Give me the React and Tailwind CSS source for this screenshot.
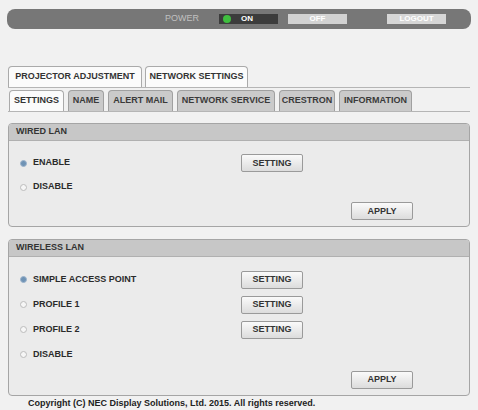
import React from 'react';

const font = { fontFamily: '"Liberation Sans", Arial, sans-serif' };

const Btn = ({ label }) => (
  <button className="w-[62px] h-[18px] rounded-[2px] border border-[#9a9a9a] bg-gradient-to-b from-[#fafafa] to-[#dcdcdc] text-[9px] font-bold text-[#333] leading-none">
    {label}
  </button>
);

const Radio = ({ checked, label }) => (
  <div className="flex items-center gap-[6px]">
    <span
      className={`w-[7px] h-[7px] rounded-full border ${
        checked ? 'bg-[#6f93b5] border-[#9db4cc]' : 'bg-[#f6f6f6] border-[#bcbcbc]'
      }`}
    />
    <span className="text-[9px] font-bold text-[#2a2a2a]">{label}</span>
  </div>
);

const Row = ({ checked, label, setting, h = 'h-[24px]' }) => (
  <div className={`flex items-center ${h}`}>
    <div className="w-[232px] pl-[11px]">
      <Radio checked={checked} label={label} />
    </div>
    {setting && <Btn label="SETTING" />}
  </div>
);

const Panel = ({ title, children }) => (
  <div className="mx-[8px] rounded-[4px] border border-[#a5a5a5] bg-[#ebebeb] overflow-hidden">
    <div className="h-[17px] bg-[#c7c7c7] border-b border-[#b0b0b0] flex items-center pl-[7px] text-[9px] font-bold text-[#333]">
      {title}
    </div>
    {children}
  </div>
);

const tabs2 = [
  { label: 'SETTINGS', w: 'w-[55px]', active: true },
  { label: 'NAME', w: 'w-[36px]' },
  { label: 'ALERT MAIL', w: 'w-[65px]' },
  { label: 'NETWORK SERVICE', w: 'w-[98px]' },
  { label: 'CRESTRON', w: 'w-[56px]' },
  { label: 'INFORMATION', w: 'w-[73px]' },
];

export default function App() {
  return (
    <div className="w-[478px] h-[410px] bg-[#f1f1f1] overflow-hidden" style={font}>
      <div className="pt-[9px] px-[7px]">
        <div className="h-[20px] rounded-[8px] bg-[#777777] flex items-center pl-[158px]">
          <span className="text-[9px] text-[#c0c0c0] w-[54px]">POWER</span>
          <div className="w-[59px] h-[10px] bg-[#3c3c3c] flex items-center pl-[4px] gap-[10px]">
            <span className="w-[8px] h-[8px] rounded-full bg-[#3fbf3f]" />
            <span className="text-[8px] font-bold text-white">ON</span>
          </div>
          <div className="ml-[10px] w-[59px] h-[10px] bg-[#d2d2d2] flex items-center justify-center text-[8px] font-bold text-white">
            OFF
          </div>
          <div className="ml-[40px] w-[59px] h-[10px] bg-[#d6d6d6] flex items-center justify-center text-[8px] font-bold text-white">
            LOGOUT
          </div>
        </div>
      </div>

      <div className="mt-[37px] pl-[8px] pr-[8px]">
        <div className="flex gap-[3px] border-b border-[#b5b5b5]">
          <div className="w-[134px] h-[21px] rounded-t-[4px] border border-b-0 border-[#aaaaaa] bg-[#fbfbfb] flex items-center justify-center text-[9px] font-bold text-[#333]">
            PROJECTOR ADJUSTMENT
          </div>
          <div className="w-[103px] h-[21px] rounded-t-[4px] border border-b-0 border-[#aaaaaa] bg-[#fbfbfb] flex items-center justify-center text-[9px] font-bold text-[#333]">
            NETWORK SETTINGS
          </div>
        </div>
        <div className="flex gap-[4px] pt-[2px] pl-[1px] border-b border-[#b5b5b5]">
          {tabs2.map((t) => (
            <div
              key={t.label}
              className={`${t.w} h-[21px] rounded-t-[4px] border border-b-0 flex items-center justify-center text-[9px] font-bold whitespace-nowrap ${
                t.active
                  ? 'bg-[#fbfbfb] border-[#aaaaaa] text-[#333]'
                  : 'bg-[#cacaca] border-[#a0a0a0] text-[#3a3a3a]'
              }`}
            >
              {t.label}
            </div>
          ))}
        </div>
      </div>

      <div className="mt-[11px]">
        <Panel title="WIRED LAN">
          <div className="pt-[10px] pb-[3px]">
            <Row checked label="ENABLE" setting />
            <Row label="DISABLE" />
            <div className="h-[24px] flex items-center pl-[342px]">
              <Btn label="APPLY" />
            </div>
          </div>
        </Panel>
      </div>

      <div className="mt-[12px]">
        <Panel title="WIRELESS LAN">
          <div className="pt-[10px] pb-[3px]">
            <Row checked label="SIMPLE ACCESS POINT" setting h="h-[25px]" />
            <Row label="PROFILE 1" setting h="h-[25px]" />
            <Row label="PROFILE 2" setting h="h-[25px]" />
            <Row label="DISABLE" h="h-[25px]" />
            <div className="h-[25px] flex items-center pl-[342px]">
              <Btn label="APPLY" />
            </div>
          </div>
        </Panel>
      </div>

      <div className="pl-[28px] pt-[1px] text-[9px] font-bold text-[#222] leading-[12px]">
        Copyright (C) NEC Display Solutions, Ltd. 2015. All rights reserved.
      </div>
    </div>
  );
}
